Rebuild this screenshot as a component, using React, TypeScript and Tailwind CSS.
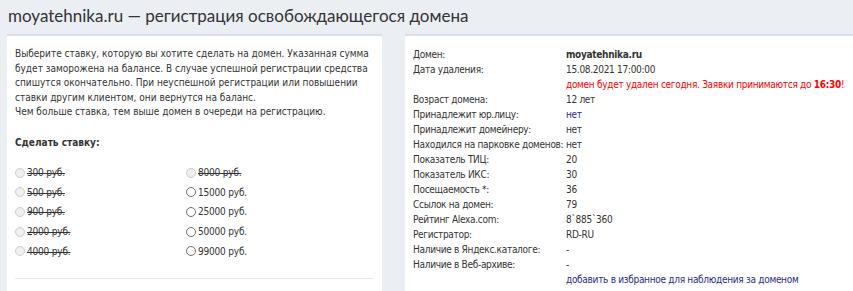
import React from "react";

const bids: [string, boolean][] = [
  ["300 руб.", true],
  ["8000 руб.", true],
  ["500 руб.", true],
  ["15000 руб.", false],
  ["900 руб.", true],
  ["25000 руб.", false],
  ["2000 руб.", true],
  ["50000 руб.", false],
  ["4000 руб.", true],
  ["99000 руб.", false],
];

type Row = { label: string; value: React.ReactNode };

const rows: Row[] = [
  { label: "Домен:", value: <span className="font-bold">moyatehnika.ru</span> },
  { label: "Дата удаления:", value: "15.08.2021 17:00:00" },
  {
    label: "",
    value: (
      <span className="text-[#ff0000] whitespace-nowrap">
        домен будет удален сегодня. Заявки принимаются до <b>16:30</b>!
      </span>
    ),
  },
  { label: "Возраст домена:", value: "12 лет" },
  { label: "Принадлежит юр.лицу:", value: <span className="text-[#2b2b8c]">нет</span> },
  { label: "Принадлежит домейнеру:", value: "нет" },
  { label: "Находился на парковке доменов:", value: "нет" },
  { label: "Показатель ТИЦ:", value: "20" },
  { label: "Показатель ИКС:", value: "30" },
  { label: "Посещаемость *:", value: "36" },
  { label: "Ссылок на домен:", value: "79" },
  { label: "Рейтинг Alexa.com:", value: "8`885`360" },
  { label: "Регистратор:", value: "RD-RU" },
  { label: "Наличие в Яндекс.каталоге:", value: "-" },
  { label: "Наличие в Веб-архиве:", value: "-" },
  { label: "", value: <span className="text-[#2b2b8c]">добавить в избранное для наблюдения за доменом</span> },
];

function Radio({ disabled }: { disabled: boolean }) {
  return (
    <span
      className={
        "inline-block w-[10px] h-[10px] rounded-full border mr-[2px] shrink-0 " +
        (disabled ? "border-[#cfcfcf] bg-[#f0f0f0]" : "border-[#6e6e6e] bg-white")
      }
    />
  );
}

export default function App() {
  return (
    <div
      className="w-[853px] h-[291px] overflow-hidden bg-[#ebeef3] text-[#333333]"
      style={{ fontFamily: '"DejaVu Sans Condensed", "DejaVu Sans", sans-serif' }}
    >
      <h1
        className="pl-[8px] pt-[5px] h-[34px] text-[17px] leading-[22px] text-[#333]"
        style={{ fontFamily: 'Lato, sans-serif' }}
      >
        moyatehnika.ru — регистрация освобождающегося домена
      </h1>
      <div className="flex gap-[23px] pl-[7px] items-start font-stretch-condensed">
        <div className="w-[375px] shrink-0 h-[260px] bg-white border-t-2 border-[#dadde4] px-[8px] pt-[11px] text-[10px]">
          <p className="leading-[14.5px]">
            Выберите ставку, которую вы хотите сделать на домен. Указанная сумма будет заморожена на
            балансе. В случае успешной регистрации средства спишутся окончательно. При неуспешной
            регистрации или повышении ставки другим клиентом, они вернутся на баланс.
            <br />
            Чем больше ставка, тем выше домен в очереди на регистрацию.
          </p>
          <div className="font-bold mt-[16px] leading-[14px]">Сделать ставку:</div>
          <div className="grid grid-cols-[171px_1fr] mt-[16px] gap-y-[5.7px] tracking-[-0.2px]">
            {bids.map(([t, dis]) => (
              <div key={t} className="flex items-center h-[14px]">
                <Radio disabled={dis} />
                <span className={dis ? "line-through" : ""}>{t}</span>
              </div>
            ))}
          </div>
          <div className="mt-[20px] border-t border-[#e8e8e8]" />
        </div>
        <div className="flex-1 min-w-0 h-[260px] bg-white border-t-2 border-[#dadde4] pl-[8px] pt-[11px] text-[10px] tracking-[-0.3px]">
          {rows.map((r, i) => (
            <div key={i} className="flex h-[15px] leading-[15px]">
              <div className="w-[153px] shrink-0 whitespace-nowrap">{r.label}</div>
              <div className="whitespace-nowrap">{r.value}</div>
            </div>
          ))}
        </div>
      </div>
    </div>
  );
}
